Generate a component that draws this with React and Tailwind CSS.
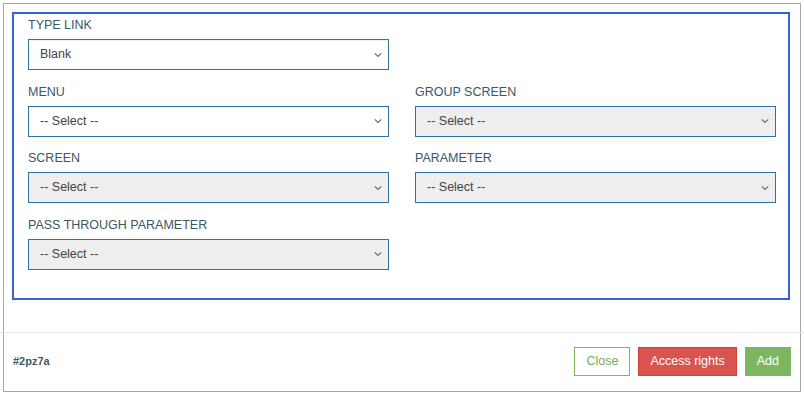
import React from 'react';

const font = { fontFamily: '"Liberation Sans", Arial, sans-serif' };

const Chevron = () => (
  <svg width="8" height="5" viewBox="0 0 8 5" className="absolute right-[6px] top-1/2 -translate-y-1/2">
    <path d="M0.8 0.8 L4 4 L7.2 0.8" fill="none" stroke="#666" strokeWidth="1.1" />
  </svg>
);

const SelectBox = ({ label, value, disabled }) => (
  <div className="flex flex-col">
    <label className="text-[12.5px] leading-[15px] text-[#3a5766] uppercase">{label}</label>
    <div
      className={
        'relative mt-[6px] h-[31px] border border-[#31709f] flex items-center pl-[11px] text-[12.5px] text-[#444] ' +
        (disabled ? 'bg-[#eeeeee]' : 'bg-white shadow-[inset_0_1px_1px_rgba(0,0,0,0.075)]')
      }
    >
      {value}
      <Chevron />
    </div>
  </div>
);

export default function App() {
  return (
    <div className="min-h-screen bg-white pt-[3px] pl-[3px]" style={font}>
      <div className="w-[798px] h-[389px] border border-[#a6a6a6] flex flex-col">
        <div className="pt-[8px] pl-[8px] pr-[8px] pb-[32px]">
          <div className="w-[778px] h-[288px] border-2 border-[#3a5edb] pt-[4px] pl-[14px]">
            <div className="grid grid-cols-[361px_361px] gap-x-[26px] gap-y-[14.5px]">
              <SelectBox label="Type Link" value="Blank" />
              <div />
              <SelectBox label="Menu" value="-- Select --" />
              <SelectBox label="Group Screen" value="-- Select --" disabled />
              <SelectBox label="Screen" value="-- Select --" disabled />
              <SelectBox label="Parameter" value="-- Select --" disabled />
              <SelectBox label="Pass Through Parameter" value="-- Select --" disabled />
            </div>
          </div>
        </div>
        <div className="-mx-[4px] border-t border-[#e3e3e3] flex-1 flex items-center justify-between pl-[13px] pr-[13px] pb-[2px]">
          <span className="text-[11px] font-bold text-[#3d5866]">#2pz7a</span>
          <div className="flex items-center gap-[8px]">
            <button className="h-[29px] px-[11px] border border-[#7cb85f] bg-white text-[#6eaf55] text-[12.5px]">Close</button>
            <button className="h-[29px] px-[11px] border border-[#d43f3a] bg-[#d9534f] text-white text-[12.5px]">Access rights</button>
            <button className="h-[29px] px-[11px] border border-[#7cb661] bg-[#7cb661] text-white text-[12.5px]">Add</button>
          </div>
        </div>
      </div>
    </div>
  );
}
